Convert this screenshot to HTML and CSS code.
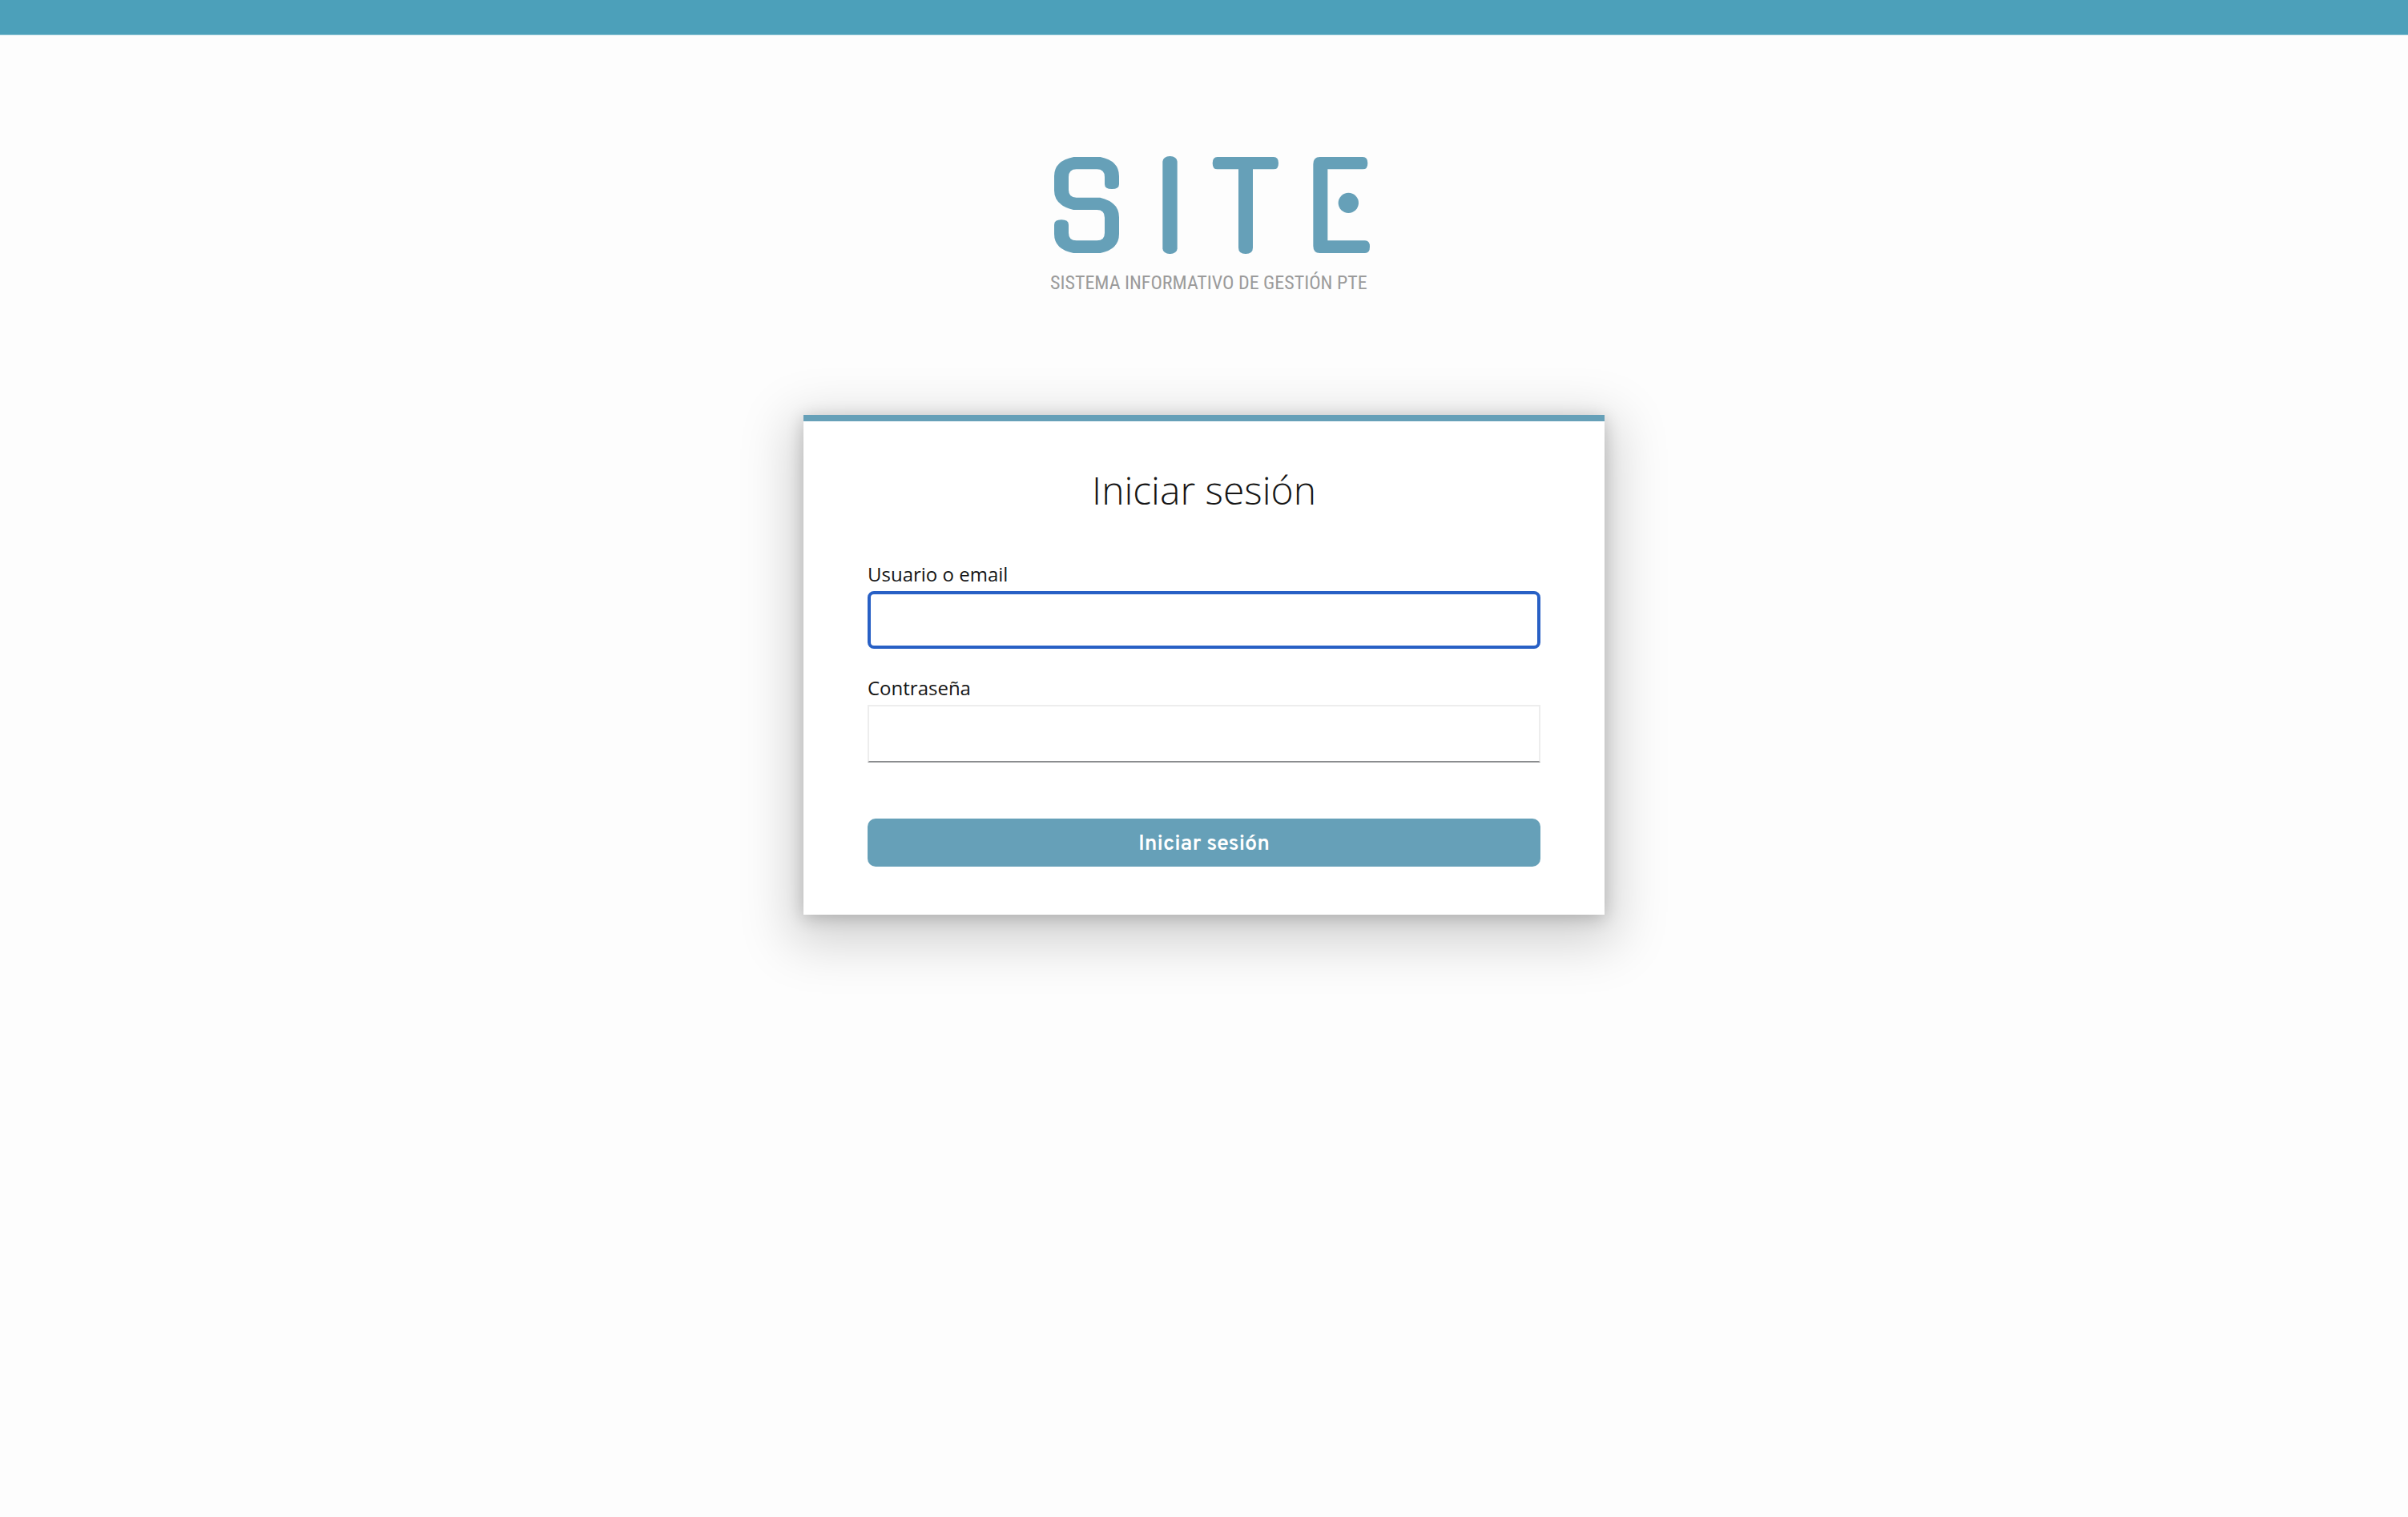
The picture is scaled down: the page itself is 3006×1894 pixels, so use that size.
FILE: index.html
```html
<!DOCTYPE html>
<html lang="es">
<head>
<meta charset="utf-8">
<meta name="viewport" content="width=device-width, initial-scale=1">
<title>Iniciar sesión</title>
<link rel="stylesheet" href="styles.css">
</head>
<body>
<header class="topbar"></header>
<main class="page">
  <div class="brand">
    <svg class="brand-logo" viewBox="63 72 1200 372" role="img" aria-label="SITE">
      <path d="M151 78H251Q321 92 321 150V180Q321 198 294 198Q267 198 267 180V153Q267 124 238 124H161Q132 124 132 153V201Q132 230 161 230H250Q321 247 321 304V366Q321 424 251 438H150Q78 424 78 366V332Q78 313 105 313Q132 313 132 332V362Q132 391 161 391H238Q267 391 267 362V305Q267 276 238 276H150Q78 259 78 203V150Q78 92 151 78Z"/>
      <rect x="484" y="75" width="55" height="366" rx="26" ry="20"/>
      <path d="M689 78H900Q918 78 918 101Q918 124 900 124H822V418Q822 441 795 441Q768 441 768 418V124H689Q671 124 671 101Q671 78 689 78Z"/>
      <path d="M1073 78H1234Q1252 78 1252 101Q1252 124 1234 124H1102V391H1242Q1260 391 1260 414Q1260 438 1242 438H1073Q1048 438 1048 411V105Q1048 78 1073 78Z"/>
      <circle cx="1180" cy="250" r="38"/>
    </svg>
    <p class="brand-tagline">SISTEMA INFORMATIVO DE GESTIÓN PTE</p>
  </div>
  <section class="card">
    <h1 class="card-title">Iniciar sesión</h1>
    <form class="form">
      <div class="field">
        <label class="field-label" for="username">Usuario o email</label>
        <input class="field-input field-input-active" id="username" name="username" type="text">
      </div>
      <div class="field">
        <label class="field-label" for="password">Contraseña</label>
        <input class="field-input" id="password" name="password" type="password">
      </div>
      <button class="submit" type="submit">Iniciar sesión</button>
    </form>
  </section>
</main>
</body>
</html>
```
FILE: styles.css
```css
* {
  box-sizing: border-box;
}

body {
  margin: 0;
  min-height: 100vh;
  background: #fdfdfd;
  color: #151515;
  font-family: "Open Sans", "Noto Sans", sans-serif;
}

.topbar {
  height: 44px;
  background: #4ca0ba;
  border-bottom: 1px solid #8fc4d4;
}

.page {
  display: flex;
  flex-direction: column;
  align-items: center;
  padding: 150px 24px 64px;
}

.brand {
  padding-left: 16px;
  margin-bottom: 148px;
}

.brand-logo {
  display: block;
  width: 400px;
  height: 124px;
  fill: #66a0b8;
}

.brand-tagline {
  margin: 18px 0 0;
  color: #9b9b9b;
  font-family: "Roboto Condensed", "Liberation Sans Narrow", Roboto, sans-serif;
  font-size: 24px;
  line-height: 34px;
  white-space: nowrap;
}

.card {
  width: 100%;
  max-width: 1000px;
  padding: 50px 80px 60px;
  background: #fff;
  border-top: 8px solid #66a0b8;
  box-shadow: 0 4px 20px rgba(0, 0, 0, 0.2), 0 20px 60px 16px rgba(0, 0, 0, 0.17);
}

.card-title {
  margin: 0 0 52px;
  font-size: 48px;
  font-weight: 300;
  line-height: 72px;
  text-align: center;
}

.form {
  display: flex;
  flex-direction: column;
}

.field {
  display: flex;
  flex-direction: column;
  margin-bottom: 32px;
}

.field + .field {
  margin-bottom: 70px;
}

.field-label {
  margin-bottom: 4px;
  font-size: 24px;
  line-height: 34px;
}

.field-input {
  height: 72px;
  padding: 0 16px;
  background: #fff;
  border: 2px solid #ededed;
  border-bottom-color: #8b8d8f;
  border-radius: 0;
  color: inherit;
  font: inherit;
  font-size: 24px;
  outline: none;
}

.field-input-active,
.field-input:focus {
  border: 4px solid #2860c5;
  border-radius: 8px;
}

.submit {
  height: 60px;
  padding: 4px 16px 0;
  border: 0;
  border-radius: 10px;
  background: #66a0b8;
  color: #fff;
  font-family: Overpass, Roboto, sans-serif;
  font-size: 27px;
  font-weight: 600;
  line-height: 36px;
  cursor: pointer;
}
```
